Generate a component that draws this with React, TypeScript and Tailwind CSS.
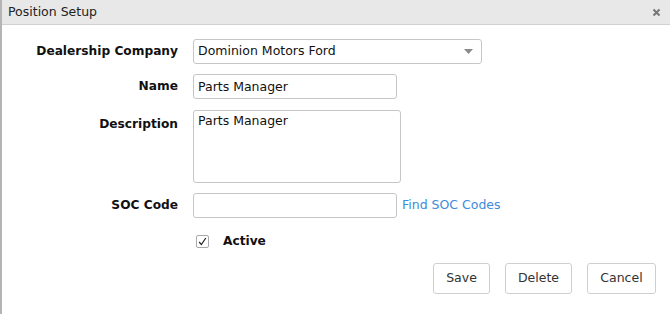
import React, { useState } from 'react'

const font = { fontFamily: '"DejaVu Sans", Verdana, sans-serif' }

export default function App() {
  const [company] = useState('Dominion Motors Ford')
  const [name, setName] = useState('Parts Manager')
  const [desc, setDesc] = useState('Parts Manager')
  const [soc, setSoc] = useState('')
  const [active, setActive] = useState(true)

  return (
    <div style={font} className="w-[670px] h-[314px] bg-white border-l-2 border-[#b4b4b4] text-[#111] overflow-hidden">
      <div className="h-[25px] bg-[#e8e8e8] border-b border-[#d2d2d2] flex items-center justify-between pl-[6px] pr-[8px]">
        <span className="text-[12.5px] text-[#222]">Position Setup</span>
        <svg width="9" height="9" viewBox="0 0 9 9" className="mr-[1px]">
          <path d="M1.5 1.5 L7.5 7.5 M7.5 1.5 L1.5 7.5" stroke="#777" strokeWidth="2" />
        </svg>
      </div>

      <div className="pt-[14px] pr-[12px]">
        <div className="flex items-center h-[25px]">
          <label className="w-[176px] text-right font-bold text-[12.2px]">Dealership Company</label>
          <div className="ml-[15px] w-[289px] h-[25px] border border-[#c6c6c6] rounded-[3px] flex items-center justify-between pl-[4px] pr-[8px]">
            <span className="text-[12.5px]">{company}</span>
            <svg width="9" height="5" viewBox="0 0 9 5">
              <path d="M0 0 L9 0 L4.5 5 Z" fill="#8a8a8a" />
            </svg>
          </div>
        </div>

        <div className="flex items-center h-[25px] mt-[10px]">
          <label className="w-[176px] text-right font-bold text-[12.2px]">Name</label>
          <input
            value={name}
            onChange={(e) => setName(e.target.value)}
            className="ml-[15px] w-[204px] h-[25px] border border-[#c6c6c6] rounded-[3px] px-[4px] text-[12.5px] outline-none"
          />
        </div>

        <div className="flex items-start mt-[11px]">
          <label className="w-[176px] text-right font-bold text-[12.2px] pt-[5px]">Description</label>
          <textarea
            value={desc}
            onChange={(e) => setDesc(e.target.value)}
            className="ml-[15px] w-[208px] h-[73px] border border-[#c6c6c6] rounded-[3px] px-[4px] pt-[1px] text-[12.5px] resize-none outline-none"
          />
        </div>

        <div className="flex items-center h-[25px] mt-[10px]">
          <label className="w-[176px] text-right font-bold text-[12.2px]">SOC Code</label>
          <input
            value={soc}
            onChange={(e) => setSoc(e.target.value)}
            className="ml-[15px] w-[204px] h-[25px] border border-[#c6c6c6] rounded-[3px] px-[4px] text-[12.5px] outline-none"
          />
          <a className="ml-[5px] text-[12.5px] text-[#3d8bd9] cursor-pointer">Find SOC Codes</a>
        </div>

        <div className="flex items-center mt-[14px] ml-[194px]">
          <button
            onClick={() => setActive(!active)}
            className="w-[13px] h-[13px] border border-[#a8a8a8] rounded-[2px] bg-white flex items-center justify-center"
          >
            {active && (
              <svg width="9" height="9" viewBox="0 0 9 9">
                <path d="M1.2 5 L3.4 7.6 L7.8 1" stroke="#222" strokeWidth="1.2" fill="none" />
              </svg>
            )}
          </button>
          <span className="ml-[14px] font-bold text-[12.2px]">Active</span>
        </div>

        <div className="flex justify-end gap-[15px] mt-[13px] pr-[2px]">
          <button className="w-[57px] h-[31px] border border-[#cfcfcf] rounded-[3px] bg-white text-[12.5px] text-[#333]">Save</button>
          <button className="w-[67px] h-[31px] border border-[#cfcfcf] rounded-[3px] bg-white text-[12.5px] text-[#333]">Delete</button>
          <button className="w-[69px] h-[31px] border border-[#cfcfcf] rounded-[3px] bg-white text-[12.5px] text-[#333]">Cancel</button>
        </div>
      </div>
    </div>
  )
}
